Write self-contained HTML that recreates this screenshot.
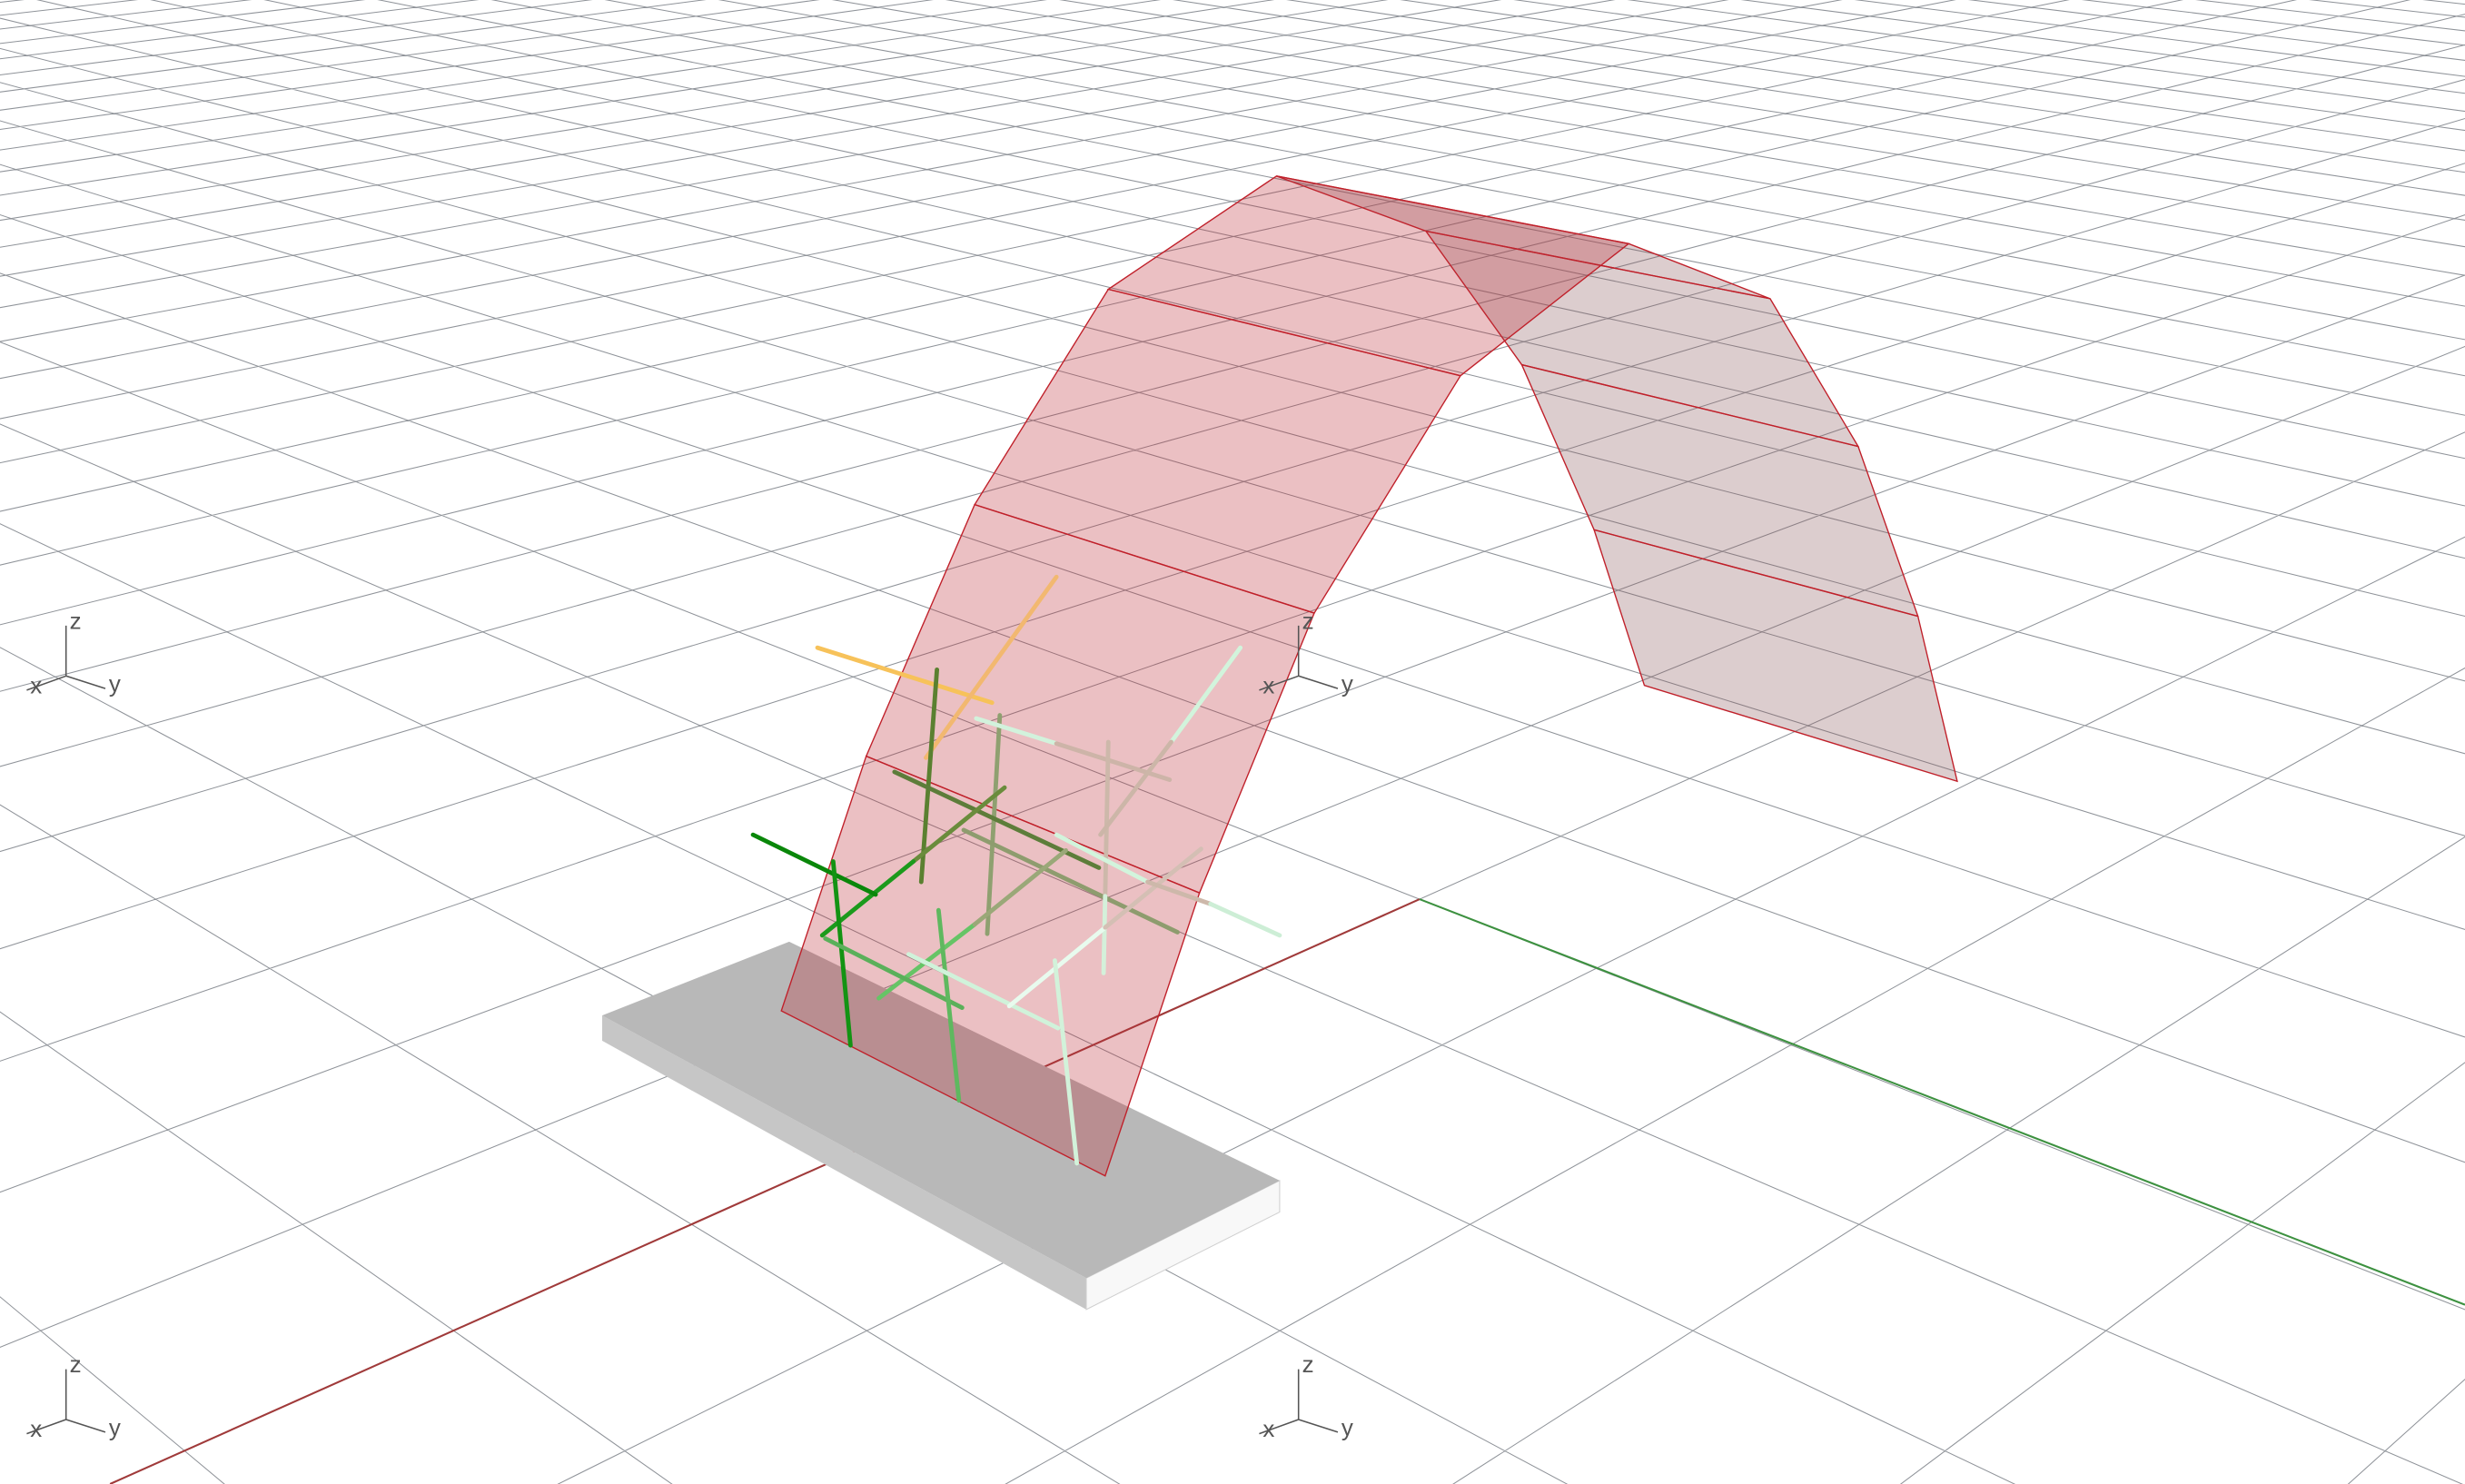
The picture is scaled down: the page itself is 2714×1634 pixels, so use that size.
<!DOCTYPE html>
<html><head><meta charset="utf-8"><style>
html,body{margin:0;padding:0;background:#fff;overflow:hidden;width:2714px;height:1634px}
svg{display:block}
text{font-family:"Liberation Sans",sans-serif;fill:#555;font-size:15px}
</style></head><body>
<svg id="s" width="2714" height="1634" viewBox="0 0 1568 944" preserveAspectRatio="none" xmlns="http://www.w3.org/2000/svg">
<rect width="1568" height="944" fill="#fff"/>
<g id="grid" stroke="#8f9399" stroke-width="0.6" fill="none"></g>
<!-- axes -->
<line x1="70" y1="944" x2="903" y2="572" stroke="#a03a3a" stroke-width="1.2"/>
<line x1="903" y1="572" x2="1568" y2="830" stroke="#3d9140" stroke-width="1.2"/>
<!-- box -->
<polygon points="383,646 691,813 691,833 383,662" fill="#c6c6c6"/>
<polygon points="691,813 814,751 814,771 691,833" fill="#f8f8f8" stroke="#d0d0d0" stroke-width="0.6"/>
<polygon points="383,646 502,599 814,751 691,813" fill="#b8b8b8"/>
<!-- arch right leg -->
<g fill="#8a5a5c" fill-opacity="0.3" stroke="#c0202a" stroke-width="0.8">
<polygon points="812,112 1036,155 1126,190 907,147"/>
<polygon points="907,147 1126,190 1182,284 968,232"/>
<polygon points="968,232 1182,284 1220,392 1014,337"/>
<polygon points="1014,337 1220,392 1245,497 1046,436"/>
</g>
<!-- arch left leg -->
<g fill="#bc3038" fill-opacity="0.3" stroke="#c0202a" stroke-width="0.8">
<polygon points="497,643 703,748 763,568 551,481"/>
<polygon points="551,481 763,568 836,390 620,321"/>
<polygon points="620,321 836,390 929,239 705,184"/>
<polygon points="705,184 929,239 1036,155 812,112"/>
</g>
<!-- sticks -->
<g stroke-linecap="round" stroke-width="2.8" fill="none">
<line x1="520" y1="412" x2="631" y2="447" stroke="#f7c25a"/>
<line x1="672" y1="367" x2="589" y2="482" stroke="#f2b870"/>
<line x1="596" y1="426" x2="586" y2="561" stroke="#5a8030"/>
<line x1="636" y1="455" x2="628" y2="594" stroke="#8fa070"/>
<line x1="569" y1="491" x2="699" y2="552" stroke="#5d7d3a"/>
<line x1="639" y1="501" x2="581" y2="548" stroke="#6a8c3c"/>
<line x1="581" y1="548" x2="523" y2="595" stroke="#1c9a1c"/>
<line x1="479" y1="531" x2="557" y2="569" stroke="#0a870a"/>
<line x1="530" y1="548" x2="541" y2="665" stroke="#139313"/>
<line x1="613" y1="528" x2="749" y2="593" stroke="#8e9c6e"/>
<line x1="621" y1="457" x2="672" y2="473" stroke="#d2f2dc"/>
<line x1="672" y1="473" x2="744" y2="496" stroke="#cdb4a8"/>
<line x1="705" y1="472" x2="703" y2="570" stroke="#cdb8aa"/>
<line x1="703" y1="570" x2="702" y2="619" stroke="#d4f0da"/>
<line x1="789" y1="412" x2="745" y2="472" stroke="#d2f4dc"/>
<line x1="745" y1="472" x2="700" y2="531" stroke="#ccb6a8"/>
<line x1="559" y1="635" x2="620" y2="588" stroke="#66c466"/>
<line x1="620" y1="588" x2="678" y2="541" stroke="#9aa878"/>
<line x1="525" y1="597" x2="612" y2="641" stroke="#5ab05a"/>
<line x1="597" y1="579" x2="610" y2="700" stroke="#5fb85f"/>
<line x1="578" y1="607" x2="673" y2="654" stroke="#d0f2da"/>
<line x1="642" y1="640" x2="703" y2="590" stroke="#e8fbee"/>
<line x1="703" y1="590" x2="764" y2="540" stroke="#d4bfb4"/>
<line x1="671" y1="611" x2="685" y2="740" stroke="#d2f2da"/>
<line x1="672" y1="531" x2="730" y2="561" stroke="#d2f4dc"/>
<line x1="730" y1="561" x2="770" y2="575" stroke="#cdb8aa"/>
<line x1="770" y1="575" x2="814" y2="595" stroke="#cdeed6"/>
</g>
<!-- triads -->
<g id="triads" stroke="#555" stroke-width="0.9"></g>
</svg>
<script>
(function(){
var NS="http://www.w3.org/2000/svg";
var O=[903,572],ex=[-94,42],ey=[107,42],g=-0.047,h=-0.047;
var A=[ex[0]+g*O[0],ex[1]+g*O[1]],B=[ey[0]+h*O[0],ey[1]+h*O[1]];
function P(u,v){var d=1+g*u+h*v;return [(O[0]+u*A[0]+v*B[0])/d,(O[1]+u*A[1]+v*B[1])/d];}
var G=document.getElementById("grid");var S=13,F=-90;
var d="";
for(var k=F;k<=S+10;k++){
 var a=P(k,F),b=P(k,S-k);
 if(S-k>F) d+="M"+a[0].toFixed(2)+" "+a[1].toFixed(2)+"L"+b[0].toFixed(2)+" "+b[1].toFixed(2);
 a=P(F,k);b=P(S-k,k);
 if(S-k>F) d+="M"+a[0].toFixed(2)+" "+a[1].toFixed(2)+"L"+b[0].toFixed(2)+" "+b[1].toFixed(2);
}
var p=document.createElementNS(NS,"path");p.setAttribute("d",d);G.appendChild(p);
var T=document.getElementById("triads");
[[42,430],[826,430],[42,903],[826,903]].forEach(function(c){
 var x=c[0],y=c[1];
 var pp=document.createElementNS(NS,"path");
 pp.setAttribute("d","M"+x+" "+y+"v-32M"+x+" "+y+"l-25 9M"+x+" "+y+"l25 8");
 T.appendChild(pp);
 [["z",6,-35],["x",-19,6],["y",31,5]].forEach(function(l){
  var t=document.createElementNS(NS,"text");
  t.setAttribute("x",x+l[1]);t.setAttribute("y",y+l[2]+5);
  t.setAttribute("text-anchor","middle");t.setAttribute("stroke","none");
  t.textContent=l[0];T.appendChild(t);
 });
});
})();
</script>
</body></html>
